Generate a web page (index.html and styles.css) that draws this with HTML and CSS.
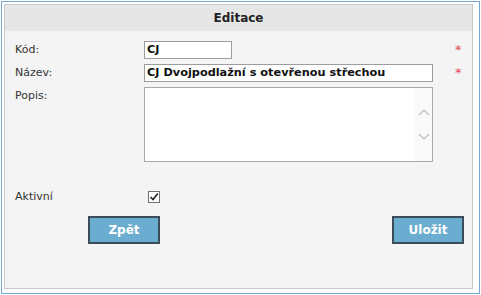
FILE: index.html
```html
<!DOCTYPE html>
<html>
<head>
    <meta charset="UTF-8">
    <title>Editace</title>
    <link rel="stylesheet" href="styles.css">
</head>
<body>
<div class="frame">
    <div class="panel">
        <div class="head">Editace</div>
        <div class="form">
            <label class="lbl">Kód:</label>
            <div class="field"><div class="inp inp-short">CJ</div></div>
            <span class="req">*</span>

            <label class="lbl">Název:</label>
            <div class="field"><div class="inp">CJ Dvojpodlažní s otevřenou střechou</div></div>
            <span class="req">*</span>

            <label class="lbl">Popis:</label>
            <div class="field">
                <div class="area">
                    <div class="area-text"></div>
                    <div class="scroll">
                        <svg width="12" height="8" viewBox="0 0 12 8"><path d="M1 7 L6 2 L11 7" fill="none" stroke="#c4c4c4" stroke-width="1.5"/></svg>
                        <svg width="12" height="8" viewBox="0 0 12 8"><path d="M1 1 L6 6 L11 1" fill="none" stroke="#c4c4c4" stroke-width="1.5"/></svg>
                    </div>
                </div>
            </div>
            <span></span>

            <label class="lbl lbl-check">Aktivní</label>
            <div class="field field-check">
                <span class="check">
                    <svg width="10" height="10" viewBox="0 0 10 10"><path d="M1.5 5 L4 7.5 L8.8 1.5" fill="none" stroke="#222" stroke-width="1.6"/></svg>
                </span>
            </div>
            <span></span>
        </div>
        <div class="btns">
            <a href="javascript:;" class="btn">Zpět</a>
            <a href="javascript:;" class="btn">Uložit</a>
        </div>
    </div>
</div>
</body>
</html>
```

FILE: styles.css
```css
html, body, div, span, label, a {
    margin: 0;
    padding: 0;
}

body {
    background: #fff;
    padding: 1px;
    font-family: "DejaVu Sans", Verdana, sans-serif;
    font-size: 11px;
    color: #333;
}

/*外框*/
.frame {
    width: 469px;
    height: 285px;
    border: 1px solid #74a6d6;
    padding: 2px 6px 4px 2px;
}

.panel {
    height: 283px;
    border: 1px solid #c9c9c9;
    background: #f4f4f4;
    display: flex;
    flex-direction: column;
}

.head {
    height: 26px;
    line-height: 26px;
    background: #e6e6e6;
    text-align: center;
    font-weight: bold;
    font-size: 12px;
    color: #222;
}

/*表单*/
.form {
    display: grid;
    grid-template-columns: 129px 289px 1fr;
    row-gap: 5px;
    padding: 10px 0 0 10px;
}

.lbl {
    line-height: 18px;
    color: #333;
}

.inp {
    height: 18px;
    box-sizing: border-box;
    border: 1px solid #9d9d9d;
    background: #fff;
    padding: 0 2px;
    line-height: 16px;
    font-weight: bold;
    color: #111;
    font-size: 11.3px;
    white-space: nowrap;
    overflow: hidden;
}

.inp-short {
    width: 88px;
}

.req {
    color: #e0474c;
    font-size: 13px;
    line-height: 18px;
    padding-left: 22px;
}

.area {
    height: 75px;
    box-sizing: border-box;
    border: 1px solid #a9a9a9;
    background: #fff;
    display: flex;
}

.area-text {
    flex: 1;
}

.scroll {
    width: 17px;
    background: #f9f9f9;
    display: flex;
    flex-direction: column;
    align-items: center;
    justify-content: space-around;
    padding: 12px 0 12px;
}

.lbl-check {
    margin-top: 21px;
}

.field-check {
    margin-top: 21px;
    padding: 3px 0 0 4px;
}

.check {
    display: flex;
    align-items: center;
    justify-content: center;
    width: 12px;
    height: 12px;
    box-sizing: border-box;
    border: 1px solid #707070;
    background: #fff;
}

/*按钮*/
.btns {
    display: flex;
    justify-content: space-between;
    padding: 10px 8px 0 83px;
}

.btn {
    display: block;
    width: 72px;
    height: 28px;
    box-sizing: border-box;
    border: 2px solid #3e4b58;
    background: #6aadd0;
    color: #fff;
    font-weight: bold;
    font-size: 12px;
    line-height: 24px;
    text-align: center;
    text-decoration: none;
}
```
